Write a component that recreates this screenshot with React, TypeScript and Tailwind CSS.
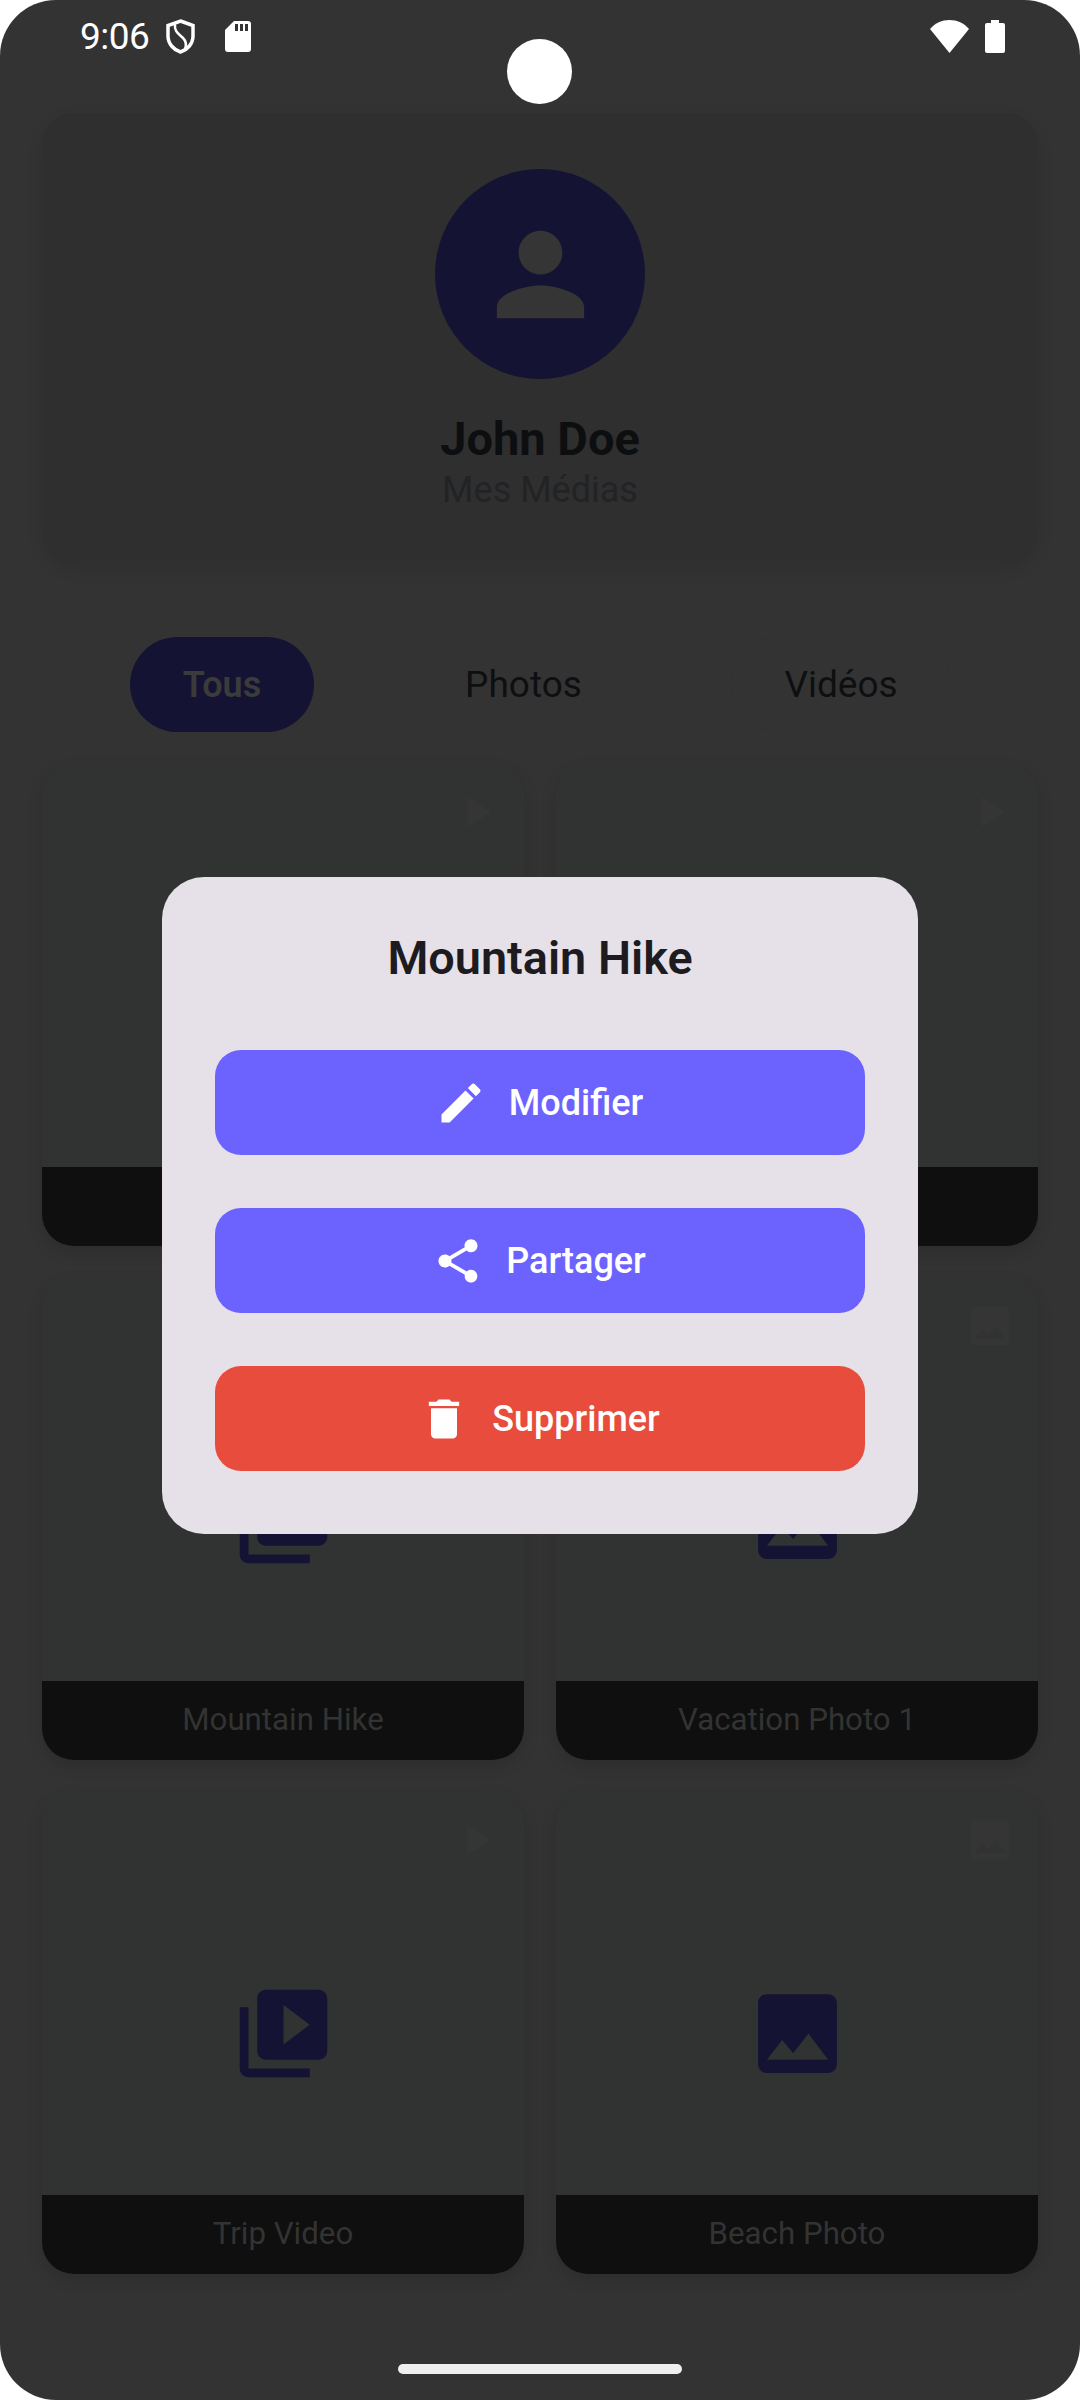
const PERSON = "M12 12c2.21 0 4-1.79 4-4s-1.79-4-4-4-4 1.79-4 4 1.79 4 4 4zm0 2c-2.67 0-8 1.34-8 4v2h16v-2c0-2.66-5.33-4-8-4z";
const IMAGE = "M21 19V5c0-1.1-.9-2-2-2H5c-1.1 0-2 .9-2 2v14c0 1.1.9 2 2 2h14c1.1 0 2-.9 2-2zM8.5 13.5l2.5 3.01L14.5 12l4.5 6H5l3.5-4.5z";
const VIDEO_LIBRARY = "M4 6H2v14c0 1.1.9 2 2 2h14v-2H4V6zm16-4H8c-1.1 0-2 .9-2 2v12c0 1.1.9 2 2 2h12c1.1 0 2-.9 2-2V4c0-1.1-.9-2-2-2zm-8 12.5v-9l6 4.5-6 4.5z";
const PLAY = "M8 5v14l11-7z";
const EDIT = "M3 17.25V21h3.75L17.81 9.94l-3.75-3.75L3 17.25zM20.71 7.04c.39-.39.39-1.02 0-1.41l-2.34-2.34c-.39-.39-1.02-.39-1.41 0l-1.83 1.83 3.75 3.75 1.83-1.83z";
const SHARE = "M18 16.08c-.76 0-1.44.3-1.96.77L8.91 12.7c.05-.23.09-.46.09-.7s-.04-.47-.09-.7l7.05-4.11c.54.5 1.25.81 2.04.81 1.66 0 3-1.34 3-3s-1.34-3-3-3-3 1.34-3 3c0 .24.04.47.09.7L8.04 9.81C7.5 9.31 6.79 9 6 9c-1.66 0-3 1.34-3 3s1.34 3 3 3c.79 0 1.5-.31 2.04-.81l7.12 4.16c-.05.21-.08.43-.08.65 0 1.61 1.31 2.92 2.92 2.92 1.61 0 2.92-1.31 2.92-2.92s-1.31-2.92-2.92-2.92z";
const TRASH = "M6 19c0 1.1.9 2 2 2h8c1.1 0 2-.9 2-2V7H6v12zM19 4h-3.5l-1-1h-5l-1 1H5v2h14V4z";

const media = [
  { title: "", video: true },
  { title: "", video: true },
  { title: "Mountain Hike", video: true },
  { title: "Vacation Photo 1", video: false },
  { title: "Trip Video", video: true },
  { title: "Beach Photo", video: false },
];

function Icon({ d, className }: { d: string; className: string }) {
  return (
    <svg viewBox="0 0 24 24" className={className} fill="currentColor">
      <path d={d} />
    </svg>
  );
}

function StatusBar() {
  return (
    <div className="relative flex h-[73px] items-center pl-[80px] pr-[75px] text-white">
      <span className="text-[37px] leading-none tracking-[-0.5px]">9:06</span>
      <svg viewBox="0 0 29 35" className="ml-[17px] h-[35px] w-[29px]" fill="none" stroke="white" strokeWidth="3.5">
        <path d="M14.5 2 L27 6.5 V17 C27 25 21 31 14.5 33 C8 31 2 25 2 17 V6.5 Z" />
        <path d="M9 5 C 8 13, 13 15, 17 19 C 20 22, 21 25, 19 30" strokeWidth="2.5" />
      </svg>
      <svg viewBox="0 0 26 31" className="ml-[30px] h-[31px] w-[26px]">
        <path d="M9 0 H23 a3 3 0 0 1 3 3 V28 a3 3 0 0 1-3 3 H3 a3 3 0 0 1-3-3 V9 Z" fill="white" />
        <path d="M10 3h3v7h-3zM15 3h3v7h-3zM20 3h3v7h-3z" fill="#343335" />
      </svg>
      <div className="ml-auto flex items-center gap-[16px]">
        <svg viewBox="0 0 39 33" className="h-[33px] w-[39px]" fill="white">
          <path d="M0 9 C 5 3 12 0 19.5 0 C 27 0 34 3 39 9 L 19.5 33 Z" />
        </svg>
        <svg viewBox="0 0 20 33" className="h-[33px] w-[20px]" fill="white">
          <path d="M6 0 h8 v3 h4 a2 2 0 0 1 2 2 V31 a2 2 0 0 1-2 2 H2 a2 2 0 0 1-2-2 V5 a2 2 0 0 1 2-2 h4 Z" />
        </svg>
      </div>
      <div className="absolute left-[507px] top-[39px] h-[65px] w-[65px] rounded-full bg-white" />
    </div>
  );
}

function MediaCard({ title, video }: { title: string; video: boolean }) {
  return (
    <div className="rounded-[32px] shadow-[0_6px_16px_rgba(0,0,0,0.14)]">
      <div className="relative flex h-[482px] items-center justify-center overflow-hidden rounded-[32px] bg-[#313332]">
        <Icon d={video ? VIDEO_LIBRARY : IMAGE} className="h-[105px] w-[105px] text-[#141333]" />
        <Icon
          d={video ? PLAY : IMAGE}
          className="absolute right-[22px] top-[22px] h-[52px] w-[52px] text-[#363535]"
        />
        <div className="absolute inset-x-0 bottom-0 flex h-[79px] items-center justify-center bg-[#0e0f0e] text-[31.25px] text-[#333333]">
          {title}
        </div>
      </div>
    </div>
  );
}

function ActionButton({ icon, label, color }: { icon: string; label: string; color: string }) {
  return (
    <button className={`flex h-[105px] items-center justify-center gap-[22px] rounded-[26px] pr-[2px] text-[36px] font-medium text-white ${color}`}>
      <Icon d={icon} className="h-[52px] w-[52px]" />
      <span>{label}</span>
    </button>
  );
}

export default function App() {
  return (
    <div className="h-[2400px] w-[1080px] bg-white font-['Roboto',sans-serif]">
      <div className="relative h-full overflow-hidden rounded-[56px] bg-[#343334]">
        <StatusBar />

        <main className="px-[42px] pt-[40px]">
          <section className="flex h-[450px] flex-col items-center rounded-[32px] bg-[#2f2f30] pt-[56px] shadow-[0_6px_16px_rgba(0,0,0,0.1)]">
            <div className="flex h-[210px] w-[210px] items-center justify-center rounded-full bg-[#141333]">
              <Icon d={PERSON} className="h-[131px] w-[131px] text-[#353535]" />
            </div>
            <h1 className="mb-[3px] mt-[33px] text-[47px] font-bold leading-[54px] text-[#0d0e10]">John Doe</h1>
            <p className="text-[36px] leading-[42px] text-[#222325]">Mes Médias</p>
          </section>

          <div className="mt-[74px] flex pl-[88px] text-[37px]">
            <div className="flex h-[95px] w-[184px] items-center justify-center rounded-full bg-[#141333] text-[36px] font-semibold text-[#3b3b3b]">Tous</div>
            <div className="ml-[99px] flex h-[95px] w-[221px] items-center justify-center rounded-full border border-[#323232] bg-[#333333] text-[#0e0f11]">Photos</div>
            <div className="ml-[96px] flex h-[95px] w-[222px] items-center justify-center rounded-full border border-[#323232] bg-[#333333] text-[#0e0f11]">Vidéos</div>
          </div>

          <div className="mt-[32px] grid grid-cols-2 gap-[32px]">
            {media.map((m, i) => (
              <MediaCard key={i} title={m.title} video={m.video} />
            ))}
          </div>
        </main>

        <div className="absolute bottom-[26px] left-[398px] h-[10px] w-[284px] rounded-full bg-[#efefef]" />

        <div className="absolute left-[162px] top-[877px] flex h-[657px] w-[756px] flex-col rounded-[42px] bg-[#e6e1e9] px-[53px] pt-[53px]">
          <h2 className="text-center text-[46.8px] font-semibold leading-[56px] text-[#1d1b20]">Mountain Hike</h2>
          <div className="mt-[64px] flex flex-col gap-[53px]">
            <ActionButton icon={EDIT} label="Modifier" color="bg-[#6c63ff]" />
            <ActionButton icon={SHARE} label="Partager" color="bg-[#6c63ff]" />
            <ActionButton icon={TRASH} label="Supprimer" color="bg-[#e74c3c]" />
          </div>
        </div>
      </div>
    </div>
  );
}
